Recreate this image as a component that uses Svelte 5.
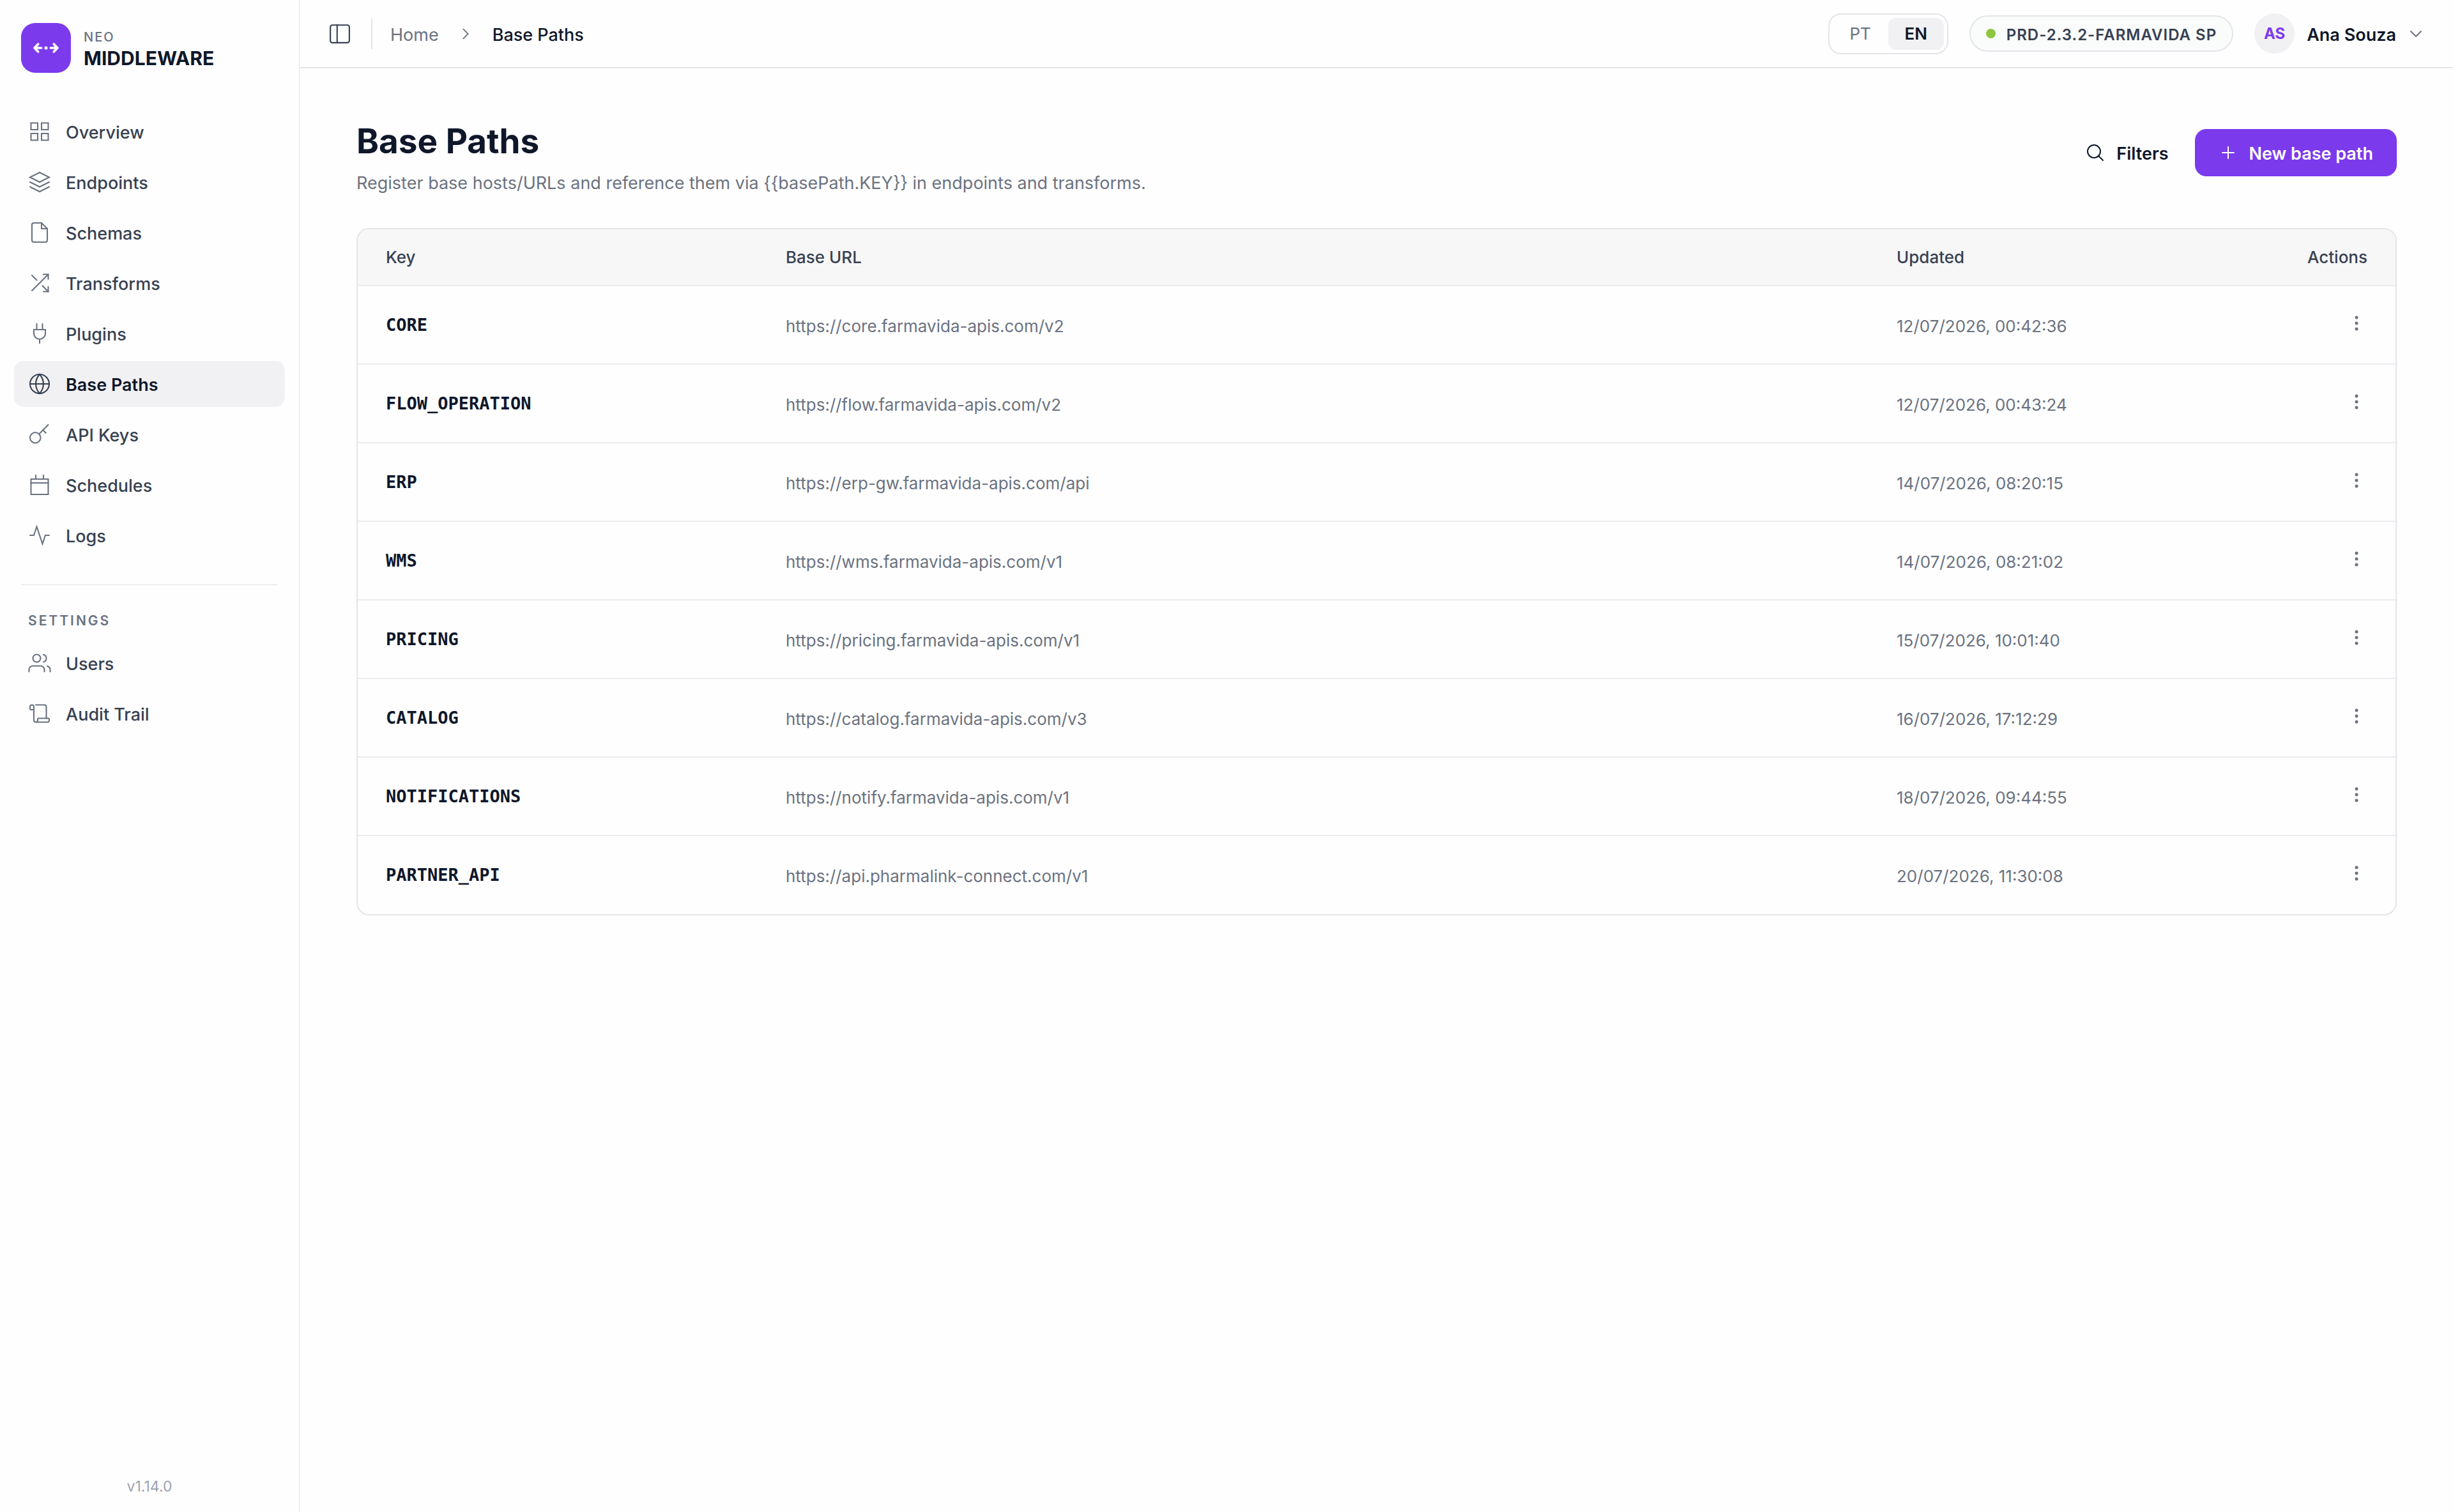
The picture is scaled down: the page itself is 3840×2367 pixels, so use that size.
<script>
  const navItems = [
    { id: 'overview', label: 'Overview' },
    { id: 'endpoints', label: 'Endpoints' },
    { id: 'schemas', label: 'Schemas' },
    { id: 'transforms', label: 'Transforms' },
    { id: 'plugins', label: 'Plugins' },
    { id: 'base-paths', label: 'Base Paths' },
    { id: 'api-keys', label: 'API Keys' },
    { id: 'schedules', label: 'Schedules' },
    { id: 'logs', label: 'Logs' }
  ];

  const settingsItems = [
    { id: 'users', label: 'Users' },
    { id: 'audit', label: 'Audit Trail' }
  ];

  const icons = {
    overview: ['M3 3h7v7H3z', 'M14 3h7v7h-7z', 'M14 14h7v7h-7z', 'M3 14h7v7H3z'],
    endpoints: ['M12 2 2 7l10 5 10-5z', 'm2 17 10 5 10-5', 'm2 12 10 5 10-5'],
    schemas: ['M14 2H6a2 2 0 0 0-2 2v16a2 2 0 0 0 2 2h12a2 2 0 0 0 2-2V8z', 'M14 2v6h6'],
    transforms: ['M16 3h5v5', 'M4 20 21 3', 'M21 16v5h-5', 'm15 15 6 6', 'm4 4 5 5'],
    plugins: ['M9 2v6', 'M15 2v6', 'M6 8h12v4a6 6 0 0 1-12 0z', 'M12 18v4'],
    'base-paths': [
      'M2 12a10 10 0 1 0 20 0 10 10 0 1 0-20 0',
      'M2 12h20',
      'M12 2a15.3 15.3 0 0 1 4 10 15.3 15.3 0 0 1-4 10 15.3 15.3 0 0 1-4-10 15.3 15.3 0 0 1 4-10z'
    ],
    'api-keys': ['M2 15.5a5.5 5.5 0 1 0 11 0 5.5 5.5 0 1 0-11 0', 'M11.4 11.6 21 2', 'm15.5 7.5 3 3'],
    schedules: ['M3 6h18v16H3z', 'M3 10h18', 'M8 2v4', 'M16 2v4'],
    logs: ['M22 12h-4l-3 9L9 3l-3 9H2'],
    users: [
      'M17 21v-2a4 4 0 0 0-4-4H5a4 4 0 0 0-4 4v2',
      'M5 7a4 4 0 1 0 8 0 4 4 0 1 0-8 0',
      'M23 21v-2a4 4 0 0 0-3-3.87',
      'M16 3.13a4 4 0 0 1 0 7.75'
    ],
    audit: [
      'M19 17V5a2 2 0 0 0-2-2H8',
      'M8 21h12a2 2 0 0 0 2-2v-1a1 1 0 0 0-1-1H11a1 1 0 0 0-1 1v1a2 2 0 1 1-4 0V5a2 2 0 1 0-4 0v2a1 1 0 0 0 1 1h3'
    ]
  };

  const rows = [
    { key: 'CORE', url: 'https://core.farmavida-apis.com/v2', updated: '12/07/2026, 00:42:36' },
    { key: 'FLOW_OPERATION', url: 'https://flow.farmavida-apis.com/v2', updated: '12/07/2026, 00:43:24' },
    { key: 'ERP', url: 'https://erp-gw.farmavida-apis.com/api', updated: '14/07/2026, 08:20:15' },
    { key: 'WMS', url: 'https://wms.farmavida-apis.com/v1', updated: '14/07/2026, 08:21:02' },
    { key: 'PRICING', url: 'https://pricing.farmavida-apis.com/v1', updated: '15/07/2026, 10:01:40' },
    { key: 'CATALOG', url: 'https://catalog.farmavida-apis.com/v3', updated: '16/07/2026, 17:12:29' },
    { key: 'NOTIFICATIONS', url: 'https://notify.farmavida-apis.com/v1', updated: '18/07/2026, 09:44:55' },
    { key: 'PARTNER_API', url: 'https://api.pharmalink-connect.com/v1', updated: '20/07/2026, 11:30:08' }
  ];

  let active = $state('base-paths');
  let language = $state('EN');
</script>

{#snippet navLink(item)}
  <li>
    <a
      class="nav-link"
      class:active={active === item.id}
      href={'#' + item.id}
      aria-current={active === item.id ? 'page' : undefined}
      onclick={() => (active = item.id)}
    >
      <svg class="nav-icon" viewBox="0 0 24 24" aria-hidden="true">
        {#each icons[item.id] as d}
          <path {d} />
        {/each}
      </svg>
      <span class="label">{item.label}</span>
    </a>
  </li>
{/snippet}

<div class="app">
  <aside class="sidebar">
    <div class="brand">
      <div class="brand-mark">
        <svg viewBox="0 0 42 42" aria-hidden="true">
          <path d="M17 21h-5.500M14.400 17.800 11.300 21l3.100 3.200M25 21h5.500M27.600 17.800 30.700 21l-3.100 3.200" />
          <circle cx="21" cy="21" r="1.400" />
        </svg>
      </div>
      <div class="brand-text label">
        <span class="brand-over">NEO</span>
        <span class="brand-name">MIDDLEWARE</span>
      </div>
    </div>

    <nav class="nav" aria-label="Main">
      <ul>
        {#each navItems as item}
          {@render navLink(item)}
        {/each}
      </ul>
      <hr />
      <h2>SETTINGS</h2>
      <ul>
        {#each settingsItems as item}
          {@render navLink(item)}
        {/each}
      </ul>
    </nav>

    <p class="version">v1.14.0</p>
  </aside>

  <div class="page">
    <header class="topbar">
      <button class="icon-button" type="button" aria-label="Toggle sidebar">
        <svg class="panel-icon" viewBox="0 0 32 32" aria-hidden="true">
          <rect x="2" y="3" width="28" height="26" rx="3" />
          <path d="M12 3v26" />
        </svg>
      </button>
      <span class="separator"></span>
      <nav class="crumbs" aria-label="Breadcrumb">
        <a class="label" href="#home">Home</a>
        <svg class="crumb-icon" viewBox="0 0 24 24" aria-hidden="true"><path d="m8 4 8 8-8 8" /></svg>
        <span class="crumb-current label" aria-current="page">Base Paths</span>
      </nav>

      <div class="topbar-right">
        <div class="language" role="group" aria-label="Language">
          {#each ['PT', 'EN'] as code}
            <button
              type="button"
              class:selected={language === code}
              aria-pressed={language === code}
              onclick={() => (language = code)}>{code}</button
            >
          {/each}
        </div>
        <div class="environment">
          <span class="dot"></span>
          <span class="label">PRD-2.3.2-FARMAVIDA SP</span>
        </div>
        <button class="account" type="button">
          <span class="avatar">AS</span>
          <span class="label">Ana Souza</span>
          <svg class="caret" viewBox="0 0 24 24" aria-hidden="true"><path d="m4 8 8 8 8-8" /></svg>
        </button>
      </div>
    </header>

    <main>
      <div class="heading">
        <div>
          <h1>Base Paths</h1>
          <p>Register base hosts/URLs and reference them via {'{{basePath.KEY}}'} in endpoints and transforms.</p>
        </div>
        <div class="heading-actions">
          <button class="filters" type="button">
            <svg viewBox="0 0 30 30" aria-hidden="true">
              <circle cx="13" cy="13" r="10" />
              <path d="m20 20 7 7" />
            </svg>
            <span class="label">Filters</span>
          </button>
          <button class="primary" type="button">
            <svg viewBox="0 0 30 30" aria-hidden="true"><path d="M15 6v18M6 15h18" /></svg>
            <span class="label">New base path</span>
          </button>
        </div>
      </div>

      <div class="table-card">
        <table>
          <thead>
            <tr>
              <th class="col-key" scope="col">Key</th>
              <th scope="col">Base URL</th>
              <th class="col-updated" scope="col">Updated</th>
              <th class="col-actions" scope="col">Actions</th>
            </tr>
          </thead>
          <tbody>
            {#each rows as row}
              <tr>
                <td class="key">{row.key}</td>
                <td class="value">{row.url}</td>
                <td class="value">{row.updated}</td>
                <td class="row-actions">
                  <button type="button" aria-label={'Actions for ' + row.key}>
                    <svg viewBox="0 0 34 34" aria-hidden="true">
                      <circle cx="17" cy="8" r="2.500" />
                      <circle cx="17" cy="17" r="2.500" />
                      <circle cx="17" cy="26" r="2.500" />
                    </svg>
                  </button>
                </td>
              </tr>
            {/each}
          </tbody>
        </table>
      </div>
    </main>
  </div>
</div>

<style>
  :global(body) {
    background: #fefefe;
  }

  .app {
    --ink: #0f172a;
    --text: #374151;
    --muted: #6b7280;
    --line: #e4e5e9;
    --accent: #7c3aed;
    display: flex;
    min-height: 100vh;
    color: var(--ink);
    font-family: Inter, 'Liberation Sans', sans-serif;
    font-size: 27px;
    line-height: 40px;
  }

  .app * {
    box-sizing: border-box;
  }

  button {
    margin: 0;
    padding: 0;
    border: 0;
    background: none;
    color: inherit;
    font: inherit;
    cursor: pointer;
  }

  a {
    color: inherit;
    text-decoration: none;
  }

  ul,
  h1,
  h2,
  p {
    margin: 0;
    padding: 0;
    list-style: none;
  }

  svg {
    display: block;
    flex: none;
    fill: none;
    stroke: currentColor;
    stroke-linecap: round;
  }

  .label {
    padding-top: 4px;
  }

  .sidebar {
    display: flex;
    flex: none;
    flex-direction: column;
    width: 469px;
    border-right: 1px solid #dfe1e6;
  }

  .brand {
    display: flex;
    gap: 20px;
    align-items: center;
    padding: 36px 33px 0;
  }

  .brand-mark {
    width: 78px;
    height: 78px;
    border-radius: 22px;
    background: var(--accent);
    color: #fff;
  }

  .brand-mark svg {
    stroke-linejoin: round;
    stroke-width: 2;
  }

  .brand-mark circle {
    fill: currentColor;
    stroke: none;
  }

  .brand-text {
    display: flex;
    flex-direction: column;
  }

  .brand-over {
    color: var(--muted);
    font-size: 20px;
    font-weight: 500;
    letter-spacing: 2px;
    line-height: 28px;
  }

  .brand-name {
    font-size: 30px;
    font-weight: 700;
    line-height: 38px;
  }

  .nav {
    flex: 1;
    padding: 56px 22px 0;
  }

  .nav ul {
    display: flex;
    flex-direction: column;
    gap: 7px;
  }

  .nav-link {
    display: flex;
    gap: 23px;
    align-items: center;
    height: 72px;
    padding: 0 22px;
    border-radius: 15px;
    color: var(--text);
    font-weight: 500;
  }

  .nav-link.active {
    background: #f1f1f3;
    color: var(--ink);
    font-weight: 600;
  }

  .nav-icon {
    width: 36px;
    height: 36px;
    color: var(--muted);
    stroke-width: 1.4;
  }

  .active .nav-icon {
    color: var(--text);
  }

  hr {
    height: 1px;
    margin: 41px 11px 40px;
    border: 0;
    background: #dfe1e6;
  }

  h2 {
    margin-bottom: 14px;
    padding-left: 22px;
    color: var(--muted);
    font-size: 21px;
    font-weight: 600;
    letter-spacing: 3px;
    line-height: 32px;
  }

  .version {
    padding: 20px;
    color: #9ca3af;
    font-size: 23px;
    text-align: center;
  }

  .page {
    flex: 1;
    min-width: 0;
  }

  .topbar {
    display: flex;
    align-items: center;
    height: 107px;
    padding: 0 46px;
    border-bottom: 2px solid var(--line);
  }

  .icon-button {
    color: var(--text);
  }

  .panel-icon {
    width: 34px;
    height: 34px;
    stroke-width: 2;
  }

  .separator {
    width: 2px;
    height: 48px;
    margin: 0 28px 0 32px;
    background: var(--line);
  }

  .crumbs {
    display: flex;
    gap: 31px;
    align-items: center;
    color: var(--muted);
  }

  .crumb-icon {
    width: 22px;
    height: 22px;
    stroke-width: 2;
  }

  .crumb-current {
    color: var(--ink);
    font-weight: 500;
  }

  .topbar-right {
    display: flex;
    gap: 33px;
    align-items: center;
    margin-left: auto;
  }

  .language {
    display: flex;
    padding: 5px;
    border: 2px solid var(--line);
    border-radius: 20px;
    color: var(--muted);
    font-size: 26px;
  }

  .language button {
    width: 87px;
    height: 50px;
    border-radius: 12px;
  }

  .language .selected {
    background: #f1f1f3;
    color: var(--ink);
    font-weight: 600;
  }

  .environment {
    display: flex;
    gap: 17px;
    align-items: center;
    height: 57px;
    padding: 0 24px;
    border: 2px solid var(--line);
    border-radius: 29px;
    background: #fafbfb;
    color: var(--text);
    font-size: 24px;
    font-weight: 600;
    letter-spacing: 1px;
  }

  .dot {
    width: 15px;
    height: 15px;
    border-radius: 50%;
    background: #8cc63f;
  }

  .account {
    display: flex;
    gap: 19px;
    align-items: center;
    font-weight: 600;
  }

  .avatar {
    width: 63px;
    height: 63px;
    border-radius: 50%;
    background: #f1f1f3;
    color: var(--accent);
    font-size: 24px;
    font-weight: 700;
    line-height: 63px;
  }

  .caret {
    width: 24px;
    height: 24px;
    color: var(--muted);
    stroke-width: 2;
  }

  main {
    padding: 81px 88px 81px 89px;
  }

  .heading {
    display: flex;
    justify-content: space-between;
    gap: 40px;
    margin-bottom: 48px;
  }

  h1 {
    margin-bottom: 11px;
    font-size: 53px;
    font-weight: 700;
    line-height: 66px;
  }

  .heading p {
    color: var(--muted);
    line-height: 44px;
  }

  .heading-actions {
    display: flex;
    gap: 4px;
    align-items: flex-start;
    padding-top: 14px;
  }

  .heading-actions button {
    display: flex;
    gap: 18px;
    align-items: center;
    height: 74px;
    padding: 0 37px;
    border-radius: 18px;
    font-weight: 600;
    white-space: nowrap;
  }

  .heading-actions svg {
    width: 30px;
    height: 30px;
    stroke-width: 2;
  }

  .heading-actions .primary {
    background: var(--accent);
    color: #fff;
  }

  .table-card {
    overflow: hidden;
    border: 2px solid var(--line);
    border-radius: 20px;
  }

  table {
    width: 100%;
    border-collapse: collapse;
    table-layout: fixed;
  }

  th {
    height: 88px;
    padding: 0 44px;
    border-bottom: 2px solid #ededef;
    background: #f7f7f8;
    color: var(--text);
    font-size: 26px;
    font-weight: 500;
    text-align: left;
  }

  .col-key {
    width: 626px;
  }

  .col-updated {
    width: 525px;
  }

  .col-actions {
    width: 300px;
    text-align: right;
  }

  td {
    height: 123px;
    padding: 0 44px;
    border-bottom: 2px solid #ebecef;
    color: var(--muted);
  }

  tr:last-child td {
    border-bottom: 0;
  }

  .key {
    color: var(--ink);
    font-family: 'DejaVu Sans Mono', monospace;
    font-weight: 700;
  }

  .value {
    padding-top: 4px;
    font-size: 26px;
  }

  .row-actions {
    padding-bottom: 6px;
  }

  .row-actions button {
    display: block;
    margin-left: auto;
  }

  .row-actions svg {
    width: 34px;
    height: 34px;
    fill: var(--muted);
    stroke: none;
  }
</style>
